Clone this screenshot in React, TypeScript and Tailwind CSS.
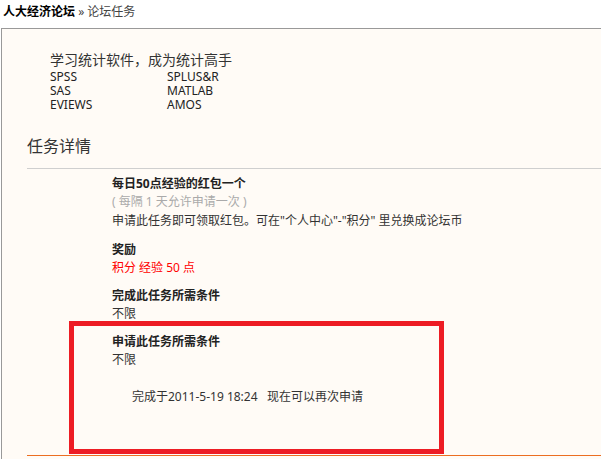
const SOFTWARE: [string, string][] = [
  ['SPSS', 'SPLUS&R'],
  ['SAS', 'MATLAB'],
  ['EVIEWS', 'AMOS'],
];

export default function App() {
  return (
    <div
      className="w-full h-[459px] overflow-hidden bg-white text-[12px] text-[#333]"
      style={{ fontFamily: '"Noto Sans", "Noto Sans CJK SC", sans-serif' }}
    >
      {/* breadcrumb */}
      <div className="h-[28px] pl-[3px] leading-[23px] whitespace-nowrap">
        <span className="font-bold text-black">人大经济论坛</span>
        <span className="text-[#444]"> » 论坛任务</span>
      </div>

      <div className="relative ml-px h-[431px] border-t border-l border-[#999] bg-[#fffbf6]">
        {/* intro */}
        <div className="pt-[22px] pl-[48px]">
          <div className="text-[14px] leading-[18px]">学习统计软件，成为统计高手</div>
          <div className="mt-px grid grid-cols-[117px_auto] leading-[14px] text-[#222]">
            {SOFTWARE.map(([a, b]) => (
              <div key={a} className="contents">
                <span>{a}</span>
                <span>{b}</span>
              </div>
            ))}
          </div>
        </div>

        <div className="mt-[22px] ml-[25px] text-[16px] leading-[24px]">任务详情</div>

        <div className="mt-[10px] ml-[25px] border-t border-[#cfcfcf]">
          <div className="pt-[6px] pl-[85px] leading-[18px]">
            <div className="font-bold text-[#222]">每日50点经验的红包一个</div>
            <div className="text-[#aaa]">( 每隔 1 天允许申请一次 )</div>
            <div className="mt-px">申请此任务即可领取红包。可在"个人中心"-"积分" 里兑换成论坛币</div>

            <div className="mt-[11px] font-bold text-[#222]">奖励</div>
            <div className="text-[#f00]">积分 经验 50 点</div>

            <div className="mt-[10px] font-bold text-[#222]">完成此任务所需条件</div>
            <div>不限</div>

            <div className="mt-[10px] font-bold text-[#222]">申请此任务所需条件</div>
            <div>不限</div>

            <div className="mt-[19px] ml-[20px] whitespace-pre">完成于2011-5-19 18:24   现在可以再次申请</div>
          </div>
          <div className="mt-[49px] border-t border-[#ec6e21]" />
        </div>

        {/* annotation box */}
        <div className="absolute left-[67px] top-[292px] w-[375px] h-[133px] border-[5px] border-[#ed1c24]" />
      </div>
    </div>
  );
}
